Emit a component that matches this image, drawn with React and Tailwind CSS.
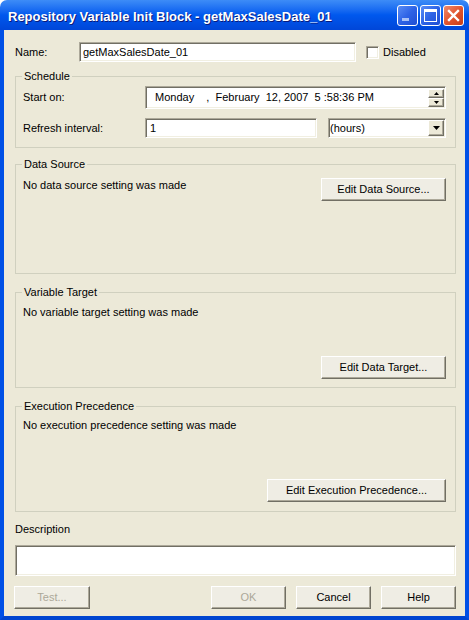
import React from 'react'

const sunken = 'border border-t-[#ACA899] border-l-[#ACA899] border-r-white border-b-white shadow-[inset_1px_1px_0_#716F64,inset_-1px_-1px_0_#F1EFE2]'
const raised = 'border border-t-white border-l-white border-r-[#716F64] border-b-[#716F64] shadow-[inset_-1px_-1px_0_#ACA899]'

function Button({ children, width, disabled }) {
  return (
    <button
      className={`${raised} ${width} flex h-[23px] items-center justify-center bg-[#EFEDE4] ${disabled ? 'text-[#ACA899]' : 'text-black'}`}
    >
      {children}
    </button>
  )
}

function Group({ title, height, children }) {
  return (
    <div className={`relative w-[441px] ${height} border border-[#D0D0BF]`}>
      <span className="absolute left-[6px] top-[-7px] bg-[#ECE9D8] px-[2px] leading-[13px]">{title}</span>
      {children}
    </div>
  )
}

function TitleButtons() {
  return (
    <div className="flex gap-[2px]">
      <div className="relative h-[21px] w-[21px] rounded-[3px] border border-white bg-gradient-to-br from-[#5A8DF5] via-[#2E63E6] to-[#1F4ED3]">
        <div className="absolute left-[4px] top-[12px] h-[3px] w-[7px] bg-[#A9C2F7]" />
      </div>
      <div className="relative h-[21px] w-[21px] rounded-[3px] border border-white bg-gradient-to-br from-[#5A8DF5] via-[#2E63E6] to-[#1F4ED3]">
        <div className="absolute left-[3px] top-[3px] h-[13px] w-[13px] border border-t-[3px] border-white" />
      </div>
      <div className="flex h-[21px] w-[21px] items-center justify-center rounded-[3px] border border-white bg-gradient-to-br from-[#EE8A6C] via-[#E2552F] to-[#C93D17]">
        <svg width="13" height="13" viewBox="0 0 13 13">
          <path d="M2 2 L11 11 M11 2 L2 11" stroke="white" strokeWidth="2.4" strokeLinecap="square" />
        </svg>
      </div>
    </div>
  )
}

export default function App() {
  return (
    <div className="flex h-[620px] w-[469px] flex-col bg-white font-['Liberation_Sans',Arial,sans-serif] text-[11px] leading-[13px] text-black">
      <div className="flex h-[30px] items-center justify-between rounded-t-[7px] bg-gradient-to-b from-[#3D8CF7] via-[#0058EE] to-[#0046D8] pl-[8px] pr-[5px]">
        <span className="pt-[2px] text-[13px] font-bold text-white [text-shadow:1px_1px_0_#0A1A7A]">
          Repository Variable Init Block - getMaxSalesDate_01
        </span>
        <TitleButtons />
      </div>

      <div className="flex flex-1 flex-col border-x-4 border-b-4 border-x-[#0050E6] border-b-[#0045D0] bg-[#ECE9D8] pl-[11px]">
        <div className="mt-[12px] flex h-[20px] items-center">
          <span className="w-[64px]">Name:</span>
          <div className={`${sunken} flex h-[20px] w-[277px] items-center bg-white pl-[3px]`}>getMaxSalesDate_01</div>
          <div className={`${sunken} ml-[10px] h-[13px] w-[13px] bg-white`} />
          <span className="ml-[4px]">Disabled</span>
        </div>

        <div className="mt-[14px]">
          <Group title="Schedule" height="h-[72px]">
            <div className="flex flex-col gap-[9px] pt-[9px]">
              <div className="flex items-center">
                <span className="w-[129px] pl-[7px]">Start on:</span>
                <div className={`${sunken} flex h-[23px] w-[301px] items-center justify-between bg-white pl-[9px] pr-[1px]`}>
                  <span className="whitespace-pre">Monday    ,  February  12, 2007  5 :58:36 PM</span>
                  <div className="flex flex-col">
                    <div className={`${raised} flex h-[9px] w-[16px] items-center justify-center bg-[#ECE9D8]`}>
                      <svg width="5" height="3" viewBox="0 0 5 3"><path d="M2.5 0 L5 3 L0 3Z" fill="black" /></svg>
                    </div>
                    <div className={`${raised} flex h-[9px] w-[16px] items-center justify-center bg-[#ECE9D8]`}>
                      <svg width="5" height="3" viewBox="0 0 5 3"><path d="M0 0 L5 0 L2.5 3Z" fill="black" /></svg>
                    </div>
                  </div>
                </div>
              </div>
              <div className="flex items-center">
                <span className="w-[129px] pl-[7px]">Refresh interval:</span>
                <div className={`${sunken} flex h-[20px] w-[172px] items-center bg-white pl-[4px]`}>1</div>
                <div className={`${sunken} ml-[11px] flex h-[20px] w-[118px] items-center justify-between bg-white pl-[1px] pr-[1px]`}>
                  <span>(hours)</span>
                  <div className={`${raised} flex h-[16px] w-[16px] items-center justify-center bg-[#ECE9D8]`}>
                    <svg width="7" height="4" viewBox="0 0 7 4"><path d="M0 0 L7 0 L3.5 4Z" fill="black" /></svg>
                  </div>
                </div>
              </div>
            </div>
          </Group>
        </div>

        <div className="mt-[16px]">
          <Group title="Data Source" height="h-[110px]">
            <div className="flex items-start justify-between pr-[9px] pt-[13px]">
              <span className="pl-[7px] pt-[1px]">No data source setting was made</span>
              <Button width="w-[125px]">Edit Data Source...</Button>
            </div>
          </Group>
        </div>

        <div className="mt-[18px]">
          <Group title="Variable Target" height="h-[96px]">
            <div className="flex h-full flex-col pb-[8px] pr-[9px] pt-[13px]">
              <span className="pl-[7px]">No variable target setting was made</span>
              <div className="mt-auto self-end">
                <Button width="w-[125px]">Edit Data Target...</Button>
              </div>
            </div>
          </Group>
        </div>

        <div className="mt-[18px]">
          <Group title="Execution Precedence" height="h-[106px]">
            <div className="flex h-full flex-col pb-[9px] pr-[9px] pt-[12px]">
              <span className="pl-[7px]">No execution precedence setting was made</span>
              <div className="mt-auto self-end">
                <Button width="w-[179px]">Edit Execution Precedence...</Button>
              </div>
            </div>
          </Group>
        </div>

        <span className="mt-[11px]">Description</span>
        <div className={`${sunken} mt-[9px] h-[31px] w-[441px] bg-white`} />

        <div className="mt-[10px] flex w-[441px] items-center">
          <div className="-ml-[1px]">
            <Button width="w-[76px]" disabled>Test...</Button>
          </div>
          <div className="ml-auto flex gap-[10px]">
            <Button width="w-[75px]" disabled>OK</Button>
            <Button width="w-[75px]">Cancel</Button>
            <Button width="w-[75px]">Help</Button>
          </div>
        </div>
      </div>
    </div>
  )
}
